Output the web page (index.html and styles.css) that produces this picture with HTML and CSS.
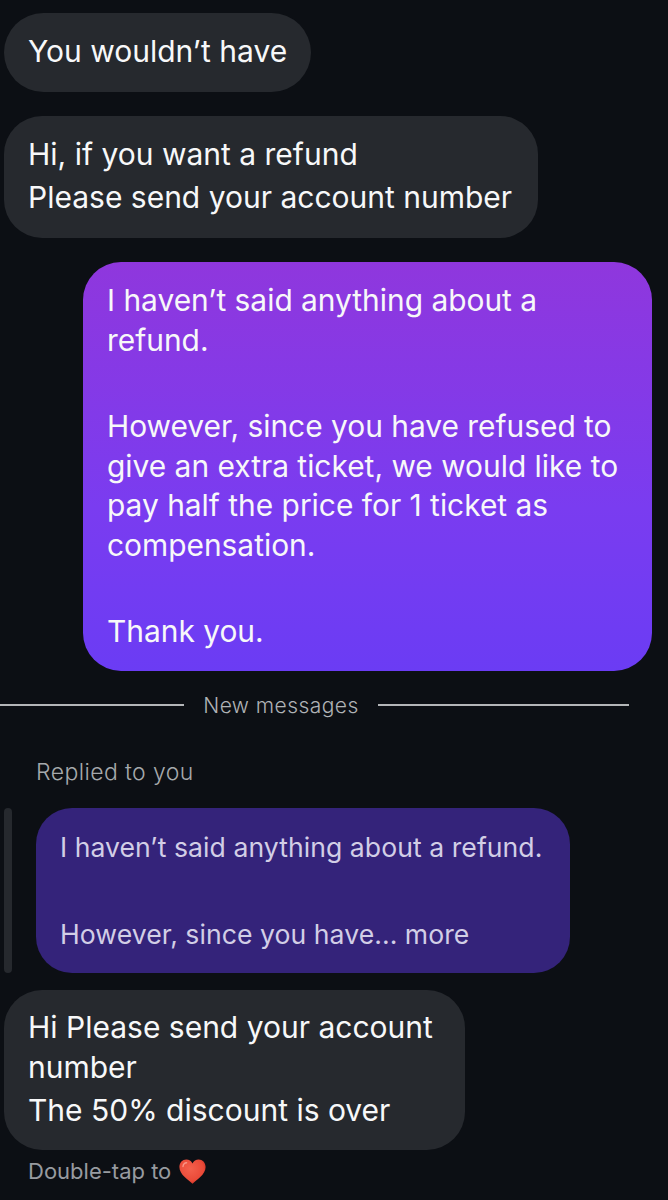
FILE: index.html
```html
<!DOCTYPE html>
<html lang="en">
<head>
<meta charset="utf-8">
<title>Messages</title>
<link rel="stylesheet" href="styles.css">
</head>
<body>
<main class="thread">
  <div class="bubble in one">You wouldn’t have</div>
  <div class="bubble in two">Hi, if you want a refund<br>Please send your account number</div>
  <div class="bubble out">
    <p>I haven’t said anything about a<br>refund.</p>
    <p>However, since you have refused to<br>give an extra ticket, we would like to<br>pay half the price for 1 ticket as<br>compensation.</p>
    <p>Thank you.</p>
  </div>
  <div class="divider"><span class="rule left"></span><span class="divider-label">New messages</span><span class="rule right"></span></div>
  <div class="replied">Replied to you</div>
  <div class="reply-row">
    <span class="reply-bar"></span>
    <div class="quote">
      <p>I haven’t said anything about a refund.</p>
      <p>However, since you have... more</p>
    </div>
  </div>
  <div class="bubble in three">Hi Please send your account<br>number<br><span class="gap-line">The 50% discount is over</span></div>
  <div class="hint">Double-tap to
    <svg class="heart" viewBox="0 0 27 25" width="27" height="25" aria-hidden="true">
      <defs><radialGradient id="h" cx="0.42" cy="0.38" r="0.7"><stop offset="0" stop-color="#f4604c"/><stop offset="0.7" stop-color="#ea4a38"/><stop offset="1" stop-color="#c92a20"/></radialGradient></defs>
      <path d="M13.500 24.800C9.500 20.800.4 15.800.4 8 .4 3.600 3.500.5 7.300.5c2.800 0 5 1.500 6.200 3.900C14.700 2 16.900.5 19.700.5c3.800 0 6.900 3.100 6.900 7.500 0 7.800-9.100 12.800-13.100 16.800z" fill="url(#h)"/>
      <path d="M4 7.500C4.300 5.300 5.700 3.900 7.600 3.800" fill="none" stroke="#ffb3a6" stroke-width="1.400" stroke-linecap="round" opacity="0.7"/>
    </svg>
  </div>
</main>
</body>
</html>
```
FILE: styles.css
```css
* { box-sizing: border-box; }
html, body { margin: 0; padding: 0; }
body {
  width: 668px;
  height: 1200px;
  overflow: hidden;
  background: #0c0f14;
  color: #f7f8f9;
  font-family: Inter, "Liberation Sans", sans-serif;
}
p { margin: 0; }
.thread {
  display: flex;
  flex-direction: column;
  align-items: flex-start;
  padding: 13px 0 0 4px;
}
.bubble {
  font-size: 30px;
  line-height: 43px;
}
.in {
  background: #26292e;
  padding-left: 24px;
}
.one { width: 307px; height: 79px; border-radius: 39.5px; padding-top: 17px; }
.two { width: 534px; height: 122px; margin-top: 24px; border-radius: 38px; padding-top: 17px; }
.out {
  width: 569px;
  height: 409px;
  margin: 24px 0 0 79px;
  padding: 19px 0 0 24px;
  border-radius: 38px;
  background: linear-gradient(180deg, #8f37dd 0%, #7a3cf0 60%, #6b3cf4 100%);
  line-height: 39.500px;
  font-size: 29.900px;
}
.out p + p { margin-top: 47px; }
.divider {
  display: flex;
  align-items: center;
  width: 629px;
  height: 24px;
  margin: 22px 0 0 -4px;
}
.rule { height: 2px; background: #b4b6b8; }
.left { width: 184px; }
.right { width: 251px; }
.divider-label {
  width: 194px;
  text-align: center;
  font-size: 21px;
  font-weight: 300;
  color: #b0b3b6;
  letter-spacing: 0.45px;
}
.replied {
  margin: 43px 0 0 32px;
  height: 24px;
  line-height: 24px;
  font-size: 23px;
  font-weight: 300;
  color: #a6a9ac;
  letter-spacing: 0.4px;
}
.reply-row {
  display: flex;
  align-items: stretch;
  margin-top: 24px;
}
.reply-bar {
  width: 8px;
  height: 165px;
  border-radius: 4px;
  background: #26292e;
}
.quote {
  width: 534px;
  height: 165px;
  margin-left: 24px;
  padding: 20px 0 0 24px;
  border-radius: 36px;
  background: #34237a;
  color: #d2cee6;
  font-size: 26.600px;
  letter-spacing: 0.05px;
  line-height: 39px;
}
.quote p + p { margin-top: 48px; }
.three {
  width: 461px;
  height: 160px;
  margin-top: 17px;
  border-radius: 38px;
  padding-top: 18px;
  line-height: 39.500px;
}
.gap-line { display: inline-block; padding-top: 3.500px; }
.hint {
  display: flex;
  align-items: center;
  gap: 8px;
  margin: 8px 0 0 24px;
  height: 26px;
  font-size: 22px;
  color: #989ba0;
}
.heart { flex: none; }
```
